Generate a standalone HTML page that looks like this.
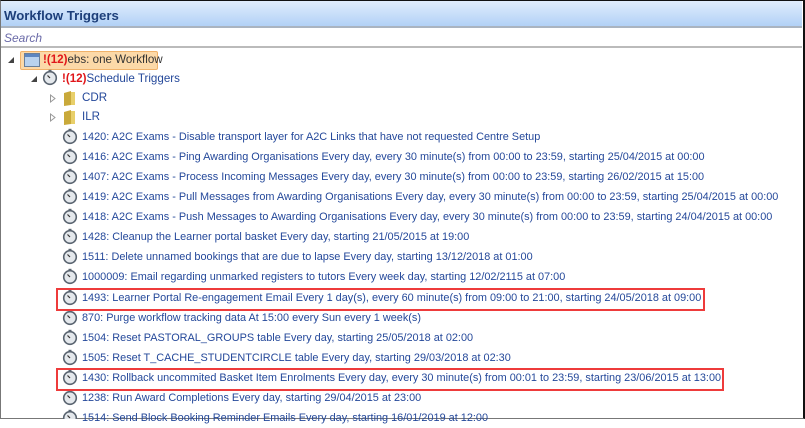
<!DOCTYPE html>
<html><head><style>
*{margin:0;padding:0;box-sizing:border-box}
body{width:805px;height:419px;overflow:hidden;background:#fff;font-family:"Liberation Sans",sans-serif;position:relative}
.frame{position:absolute;left:0;top:0;width:805px;height:419px;border:1px solid #777;border-right:2px solid #111;border-top:1px solid #111}
.hdr{position:absolute;left:1px;top:1px;width:801px;height:27px;background:linear-gradient(#e0edfc,#b2d1f6);border-bottom:2px solid #aab4c0;font-weight:bold;font-size:13.2px;color:#1d3f7a;padding:7px 0 0 3px}
.search{position:absolute;left:1px;top:29px;width:801px;height:19px;border-bottom:2px solid #bbb;font-style:italic;font-size:12px;color:#6a6aa8;padding:2px 0 0 3px}
.row{position:absolute;height:20px;font-size:10.9px;color:#24489a;white-space:nowrap;line-height:20px}
.red{color:#e0161a;font-weight:bold}
.box{position:absolute;border:2px solid #ee3b3b}
svg{position:absolute}
</style></head><body>
<div class="frame"></div>
<div class="hdr">Workflow Triggers</div>
<div class="search">Search</div>
<svg style="left:7px;top:56px" width="8" height="8"><path d="M7 1V7H1Z" fill="#444"/></svg>
<div style="position:absolute;left:20px;top:51px;width:138px;height:19px;background:#fcd9a8;border:1px solid #f0b26a;border-radius:2px"></div>
<svg style="left:24px;top:53px" width="16" height="14"><rect x="0.5" y="0.5" width="15" height="13" fill="#b9d2ee" stroke="#6a7f99"/><rect x="1" y="1" width="14" height="3" fill="#5d86c0"/></svg>
<div class="row" style="left:43px;top:50px;color:#333;font-size:11.6px"><span class="red">!(12)</span>ebs: one Workflow</div>
<svg style="left:30px;top:75px" width="8" height="8"><path d="M7 1V7H1Z" fill="#444"/></svg>
<div class="row" style="left:62px;top:69px;font-size:11.6px"><span class="red">!(12)</span>Schedule Triggers</div>
<svg style="left:49px;top:94px" width="8" height="9"><path d="M1.5 1L6 4.5L1.5 8Z" fill="none" stroke="#999"/></svg>
<svg style="left:63px;top:91px" width="14" height="15"><path d="M1 2L8 0V14L1 15Z" fill="#c9a93a"/><path d="M8 1H12V14H8Z" fill="#e8cf6a"/></svg>
<div class="row" style="left:82px;top:88px;font-size:11.6px">CDR</div>
<svg style="left:49px;top:113px" width="8" height="9"><path d="M1.5 1L6 4.5L1.5 8Z" fill="none" stroke="#999"/></svg>
<svg style="left:63px;top:110px" width="14" height="15"><path d="M1 2L8 0V14L1 15Z" fill="#c9a93a"/><path d="M8 1H12V14H8Z" fill="#e8cf6a"/></svg>
<div class="row" style="left:82px;top:107px;font-size:11.6px">ILR</div>
<div class="row" style="left:82px;top:127px">1420: A2C Exams - Disable transport layer for A2C Links that have not requested Centre Setup</div>
<div class="row" style="left:82px;top:147px">1416: A2C Exams - Ping Awarding Organisations Every day, every 30 minute(s) from 00:00 to 23:59, starting 25/04/2015 at 00:00</div>
<div class="row" style="left:82px;top:167px">1407: A2C Exams - Process Incoming Messages Every day, every 30 minute(s) from 00:00 to 23:59, starting 26/02/2015 at 15:00</div>
<div class="row" style="left:82px;top:187px">1419: A2C Exams - Pull Messages from Awarding Organisations Every day, every 30 minute(s) from 00:00 to 23:59, starting 25/04/2015 at 00:00</div>
<div class="row" style="left:82px;top:207px">1418: A2C Exams - Push Messages to Awarding Organisations Every day, every 30 minute(s) from 00:00 to 23:59, starting 24/04/2015 at 00:00</div>
<div class="row" style="left:82px;top:227px">1428: Cleanup the Learner portal basket Every day, starting 21/05/2015 at 19:00</div>
<div class="row" style="left:82px;top:247px">1511: Delete unnamed bookings that are due to lapse Every day, starting 13/12/2018 at 01:00</div>
<div class="row" style="left:82px;top:267px">1000009: Email regarding unmarked registers to tutors Every week day, starting 12/02/2115 at 07:00</div>
<div class="row" style="left:82px;top:288px">1493: Learner Portal Re-engagement Email Every 1 day(s), every 60 minute(s) from 09:00 to 21:00, starting 24/05/2018 at 09:00</div>
<div class="row" style="left:82px;top:308px">870: Purge workflow tracking data At 15:00 every Sun every 1 week(s)</div>
<div class="row" style="left:82px;top:328px">1504: Reset PASTORAL_GROUPS table Every day, starting 25/05/2018 at 02:00</div>
<div class="row" style="left:82px;top:348px">1505: Reset T_CACHE_STUDENTCIRCLE table Every day, starting 29/03/2018 at 02:30</div>
<div class="row" style="left:82px;top:368px">1430: Rollback uncommited Basket Item Enrolments Every day, every 30 minute(s) from 00:01 to 23:59, starting 23/06/2015 at 13:00</div>
<div class="row" style="left:82px;top:388px">1238: Run Award Completions Every day, starting 29/04/2015 at 23:00</div>
<div class="row" style="left:82px;top:408px">1514: Send Block Booking Reminder Emails Every day, starting 16/01/2019 at 12:00</div>
<svg style="left:0;top:0" width="805" height="419">
<defs><g id="sw"><circle cx="8" cy="9" r="6.3" fill="#e4e8ec" stroke="#5a6470" stroke-width="1.6"/><rect x="6.5" y="0.8" width="3" height="2" fill="#5a6470"/><path d="M8 9L5.5 6.5" stroke="#333" stroke-width="1.2"/></g></defs>
<use href="#sw" x="42" y="69"/>
<use href="#sw" x="62" y="128"/><use href="#sw" x="62" y="148"/><use href="#sw" x="62" y="168"/><use href="#sw" x="62" y="188"/><use href="#sw" x="62" y="208"/><use href="#sw" x="62" y="228"/><use href="#sw" x="62" y="248"/><use href="#sw" x="62" y="268"/><use href="#sw" x="62" y="289"/><use href="#sw" x="62" y="309"/><use href="#sw" x="62" y="329"/><use href="#sw" x="62" y="349"/><use href="#sw" x="62" y="369"/><use href="#sw" x="62" y="389"/><use href="#sw" x="62" y="409"/>
</svg>
<div class="box" style="left:56px;top:288px;width:649px;height:23px"></div>
<div class="box" style="left:56px;top:368px;width:668px;height:23px"></div>
</body></html>
